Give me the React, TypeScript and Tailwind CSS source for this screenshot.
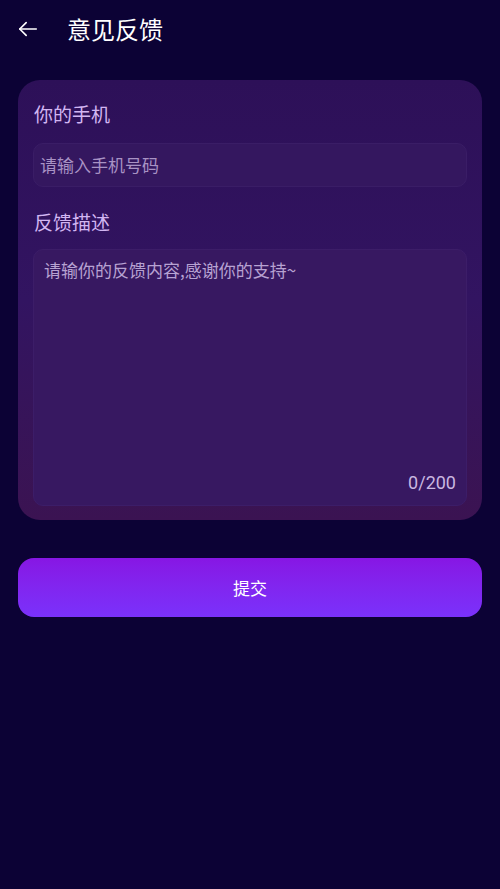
import React from "react";

export default function App() {
  return (
    <div
      className="w-[500px] h-[889px] bg-[#0c0235] text-white overflow-hidden"
      style={{ fontFamily: '"Noto Sans CJK SC", "Noto Sans", sans-serif' }}
    >
      <div className="h-[60px] flex items-center pl-[17px] pb-[2px]">
        <svg width="22" height="22" viewBox="0 0 24 24" fill="none" stroke="white" strokeWidth="1.8" strokeLinecap="round" strokeLinejoin="round">
          <path d="M21 12H3" />
          <path d="M10 5l-7 7 7 7" />
        </svg>
        <div className="ml-[28px] text-[24px] leading-none text-white">意见反馈</div>
      </div>

      <div className="mx-[18px] mt-[20px] rounded-[22px] bg-gradient-to-b from-[#2d1058] via-[#321461] to-[#3b1352] px-[15px] pt-[21px] pb-[14px]">
        <div className="text-[19px] leading-[26px] text-[#d2b6f2] pl-[1px]">你的手机</div>
        <div className="mt-[16px] h-[44px] rounded-[10px] bg-[#34175f] border border-[#3a1d66] flex items-center px-[6px]">
          <span className="text-[17px] text-[#a892c4]">请输入手机号码</span>
        </div>
        <div className="mt-[22px] text-[19px] leading-[26px] text-[#d2b6f2] pl-[1px]">反馈描述</div>
        <div className="mt-[14px] h-[257px] rounded-[10px] bg-[#371861] border border-[#3c1d68] flex flex-col px-[10px] pt-[8px] pb-[9px]">
          <span className="text-[17px] leading-[24px] text-[#b7a2d2]">请输你的反馈内容,感谢你的支持~</span>
          <span className="mt-auto self-end text-[18px] text-[#c9b7e0]" style={{ fontFamily: 'Roboto, "Noto Sans", sans-serif' }}>0/200</span>
        </div>
      </div>

      <div className="mx-[18px] mt-[38px] h-[59px] rounded-[16px] bg-gradient-to-b from-[#8716e4] to-[#7a31fb] flex items-center justify-center">
        <span className="text-[17px] text-white">提交</span>
      </div>
    </div>
  );
}
